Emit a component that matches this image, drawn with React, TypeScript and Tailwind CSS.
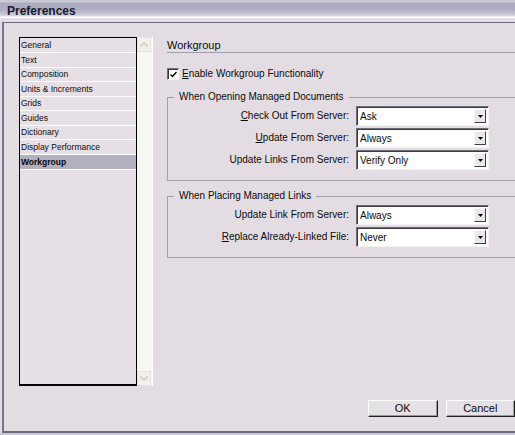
import React from "react";

const listItems: { label: string; h: string; selected?: boolean }[] = [
  { label: "General", h: "h-[15px]" },
  { label: "Text", h: "h-[15px]" },
  { label: "Composition", h: "h-[14px]" },
  { label: "Units & Increments", h: "h-[15px]" },
  { label: "Grids", h: "h-[14px]" },
  { label: "Guides", h: "h-[15px]" },
  { label: "Dictionary", h: "h-[14px]" },
  { label: "Display Performance", h: "h-[15px]" },
  { label: "Workgroup", h: "h-[15px]", selected: true },
];

function Mnemonic({ text }: { text: string }) {
  return (
    <>
      <span className="underline underline-offset-[1px]">{text[0]}</span>
      {text.slice(1)}
    </>
  );
}

function Select({ value }: { value: string }) {
  return (
    <div className="flex h-[20px] w-[133px] border border-t-[#6f6d75] border-l-[#6f6d75] border-r-[#f4f2f4] border-b-[#f4f2f4] bg-white shadow-[inset_1px_1px_0_#3a3a3a]">
      <div className="flex flex-1 items-center pl-[3px] pt-px text-[10px] leading-none">{value}</div>
      <div className="my-[2px] mr-[2px] flex w-[12px] items-center justify-center border border-t-[#f6f6f6] border-l-[#f6f6f6] border-r-[#404040] border-b-[#404040] bg-[#ebe8eb]">
        <svg width="5" height="3" viewBox="0 0 5 3">
          <path d="M0 0H5L2.5 3Z" fill="#000" />
        </svg>
      </div>
    </div>
  );
}

function Row({ label, value, mnemonic = true }: { label: string; value: string; mnemonic?: boolean }) {
  return (
    <div className="flex items-center">
      <div className="w-[182px] pr-px text-right text-[10px] leading-none">
        {mnemonic ? <Mnemonic text={label} /> : label}
      </div>
      <div className="ml-[6px]">
        <Select value={value} />
      </div>
    </div>
  );
}

function Group({ legend, children }: { legend: string; children: React.ReactNode }) {
  return (
    <fieldset className="w-[380px] border border-[#a29eaa] pt-[3px] pb-[10px]">
      <legend className="ml-[6px] px-[5px] text-[10px] leading-[12px]">{legend}</legend>
      <div className="flex flex-col gap-[2px]">{children}</div>
    </fieldset>
  );
}

function ScrollButton({ up }: { up?: boolean }) {
  return (
    <div className="flex h-[15px] w-[14px] items-center justify-center border border-[#e4e2dc] bg-[#f1f0ec]">
      <svg width="8" height="5" viewBox="0 0 8 5">
        <path d={up ? "M0.5 4.5L4 1L7.5 4.5" : "M0.5 0.5L4 4L7.5 0.5"} stroke="#d0cdbf" strokeWidth="1.6" fill="none" />
      </svg>
    </div>
  );
}

function Button({ label }: { label: string }) {
  return (
    <div className="flex h-[17px] w-[83px] items-center justify-center border border-t-[#ffffff] border-l-[#ffffff] border-r-[#202020] border-b-[#202020] bg-[#e6e1e6] text-[11px] leading-none shadow-[inset_-1px_-1px_0_#9a97a0]">
      {label}
    </div>
  );
}

export default function App() {
  return (
    <div className="relative h-[435px] w-[515px] overflow-hidden bg-[#e3dde3] font-['Liberation_Sans',Arial,sans-serif] text-[#0a0a0a]">
      {/* title bar */}
      <div className="h-[22px] bg-[linear-gradient(to_bottom,#cbc9d3_0px,#cbc9d3_2px,#acabbf_3px,#afaec2_10px,#cfccd6_15px,#dcd8e0_16px,#ffffff_17px,#ffffff_18px,#e3dde3_18px)] pl-[7px] pt-[5px] text-[12px] leading-[13px] font-bold text-[#1a1a30]">
        Preferences
      </div>

      {/* window body */}
      <div className="ml-[2px] flex h-[411px] flex-col border-t border-b-2 border-l-2 border-[#6c6b84] border-l-[#777690] pl-[15px] pt-[14px]">
        <div className="flex">
          {/* category list */}
          <div className="flex h-[349px] w-[134px] border-r border-[#ffffff]">
            <div className="flex w-[119px] flex-col border border-b-2 border-black bg-[#e6e0e6]">
              {listItems.map((it) => (
                <div
                  key={it.label}
                  className={`${it.h} flex items-center border-b border-white pl-px text-[8.5px] leading-none ${
                    it.selected ? "bg-[#b2afbf] font-bold" : ""
                  }`}
                >
                  {it.label}
                </div>
              ))}
            </div>
            <div className="flex w-[15px] flex-col justify-between bg-[#f6f6f3]">
              <ScrollButton up />
              <ScrollButton />
            </div>
          </div>

          {/* workgroup panel */}
          <div className="ml-[14px] flex w-[380px] flex-col">
            <div className="h-[16px] border-b border-[#a19daa] pt-px text-[11px] leading-[14px]">Workgroup</div>

            <div className="mt-[15px] flex items-center">
              <div className="flex h-[12px] w-[12px] items-center justify-center border border-t-[#6f6d75] border-l-[#6f6d75] border-r-[#f4f2f4] border-b-[#f4f2f4] bg-white shadow-[inset_1px_1px_0_#3a3a3a]">
                <svg width="7" height="7" viewBox="0 0 7 7">
                  <path d="M0.5 3.5L2.5 5.5L6.5 1" stroke="#000" strokeWidth="1.5" fill="none" />
                </svg>
              </div>
              <span className="ml-[3px] text-[10px] leading-none">
                <Mnemonic text="Enable Workgroup Functionality" />
              </span>
            </div>

            <div className="mt-[11px]">
              <Group legend="When Opening Managed Documents">
                <Row label="Check Out From Server:" value="Ask" />
                <Row label="Update From Server:" value="Always" />
                <Row label="Update Links From Server:" value="Verify Only" mnemonic={false} />
              </Group>
            </div>

            <div className="mt-[9px]">
              <Group legend="When Placing Managed Links">
                <Row label="Update Link From Server:" value="Always" mnemonic={false} />
                <Row label="Replace Already-Linked File:" value="Never" />
              </Group>
            </div>
          </div>
        </div>

        {/* dialog buttons */}
        <div className="mt-[14px] flex gap-[8px] pl-[349px]">
          <Button label="OK" />
          <Button label="Cancel" />
        </div>
      </div>
      <div className="h-[2px] bg-[#c9c7d2]" />
    </div>
  );
}
